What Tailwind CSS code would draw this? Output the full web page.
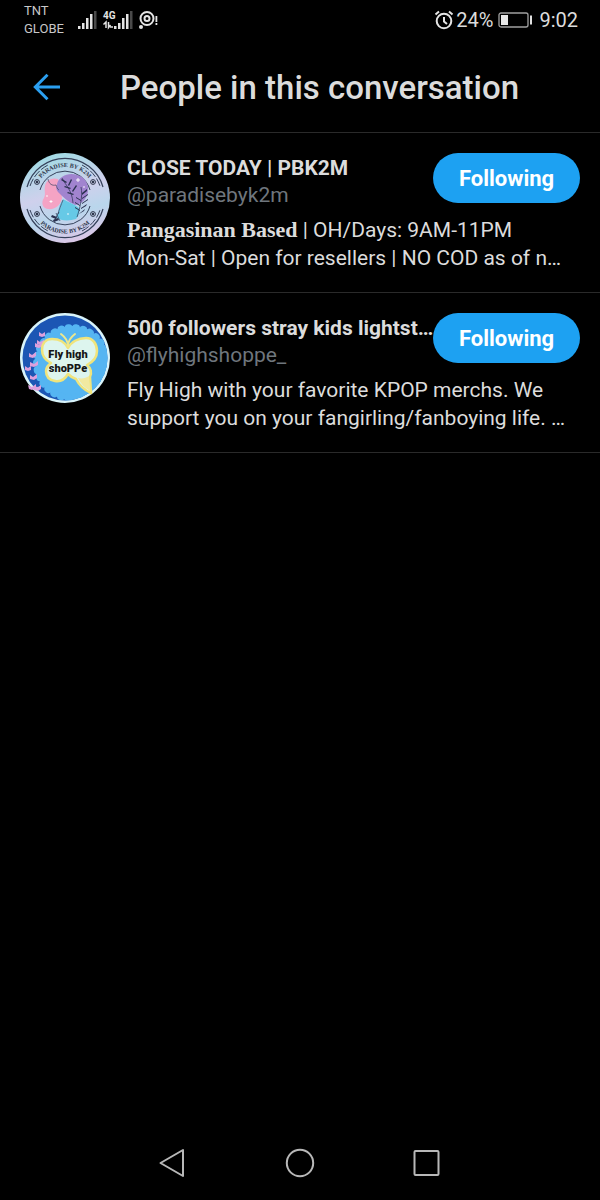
<!DOCTYPE html>
<html lang="en">
<head>
  <meta charset="UTF-8" />
  <meta name="viewport" content="width=device-width, initial-scale=1.0"/>
  <title>People in this conversation</title>
  <script src="https://cdn.jsdelivr.net/npm/@tailwindcss/browser@4"></script>
</head>
<body class="flex flex-col min-h-screen bg-black text-[#dcdcdc] font-['Roboto',sans-serif]">
  <!-- Status bar -->
  <div class="flex items-center justify-between h-10 pl-6 pr-[22px]">
    <div class="flex items-center gap-3">
      <p class="text-[13px] leading-[18px] text-[#c8c8c8]">TNT<br>GLOBE</p>
      <svg class="w-[82px] h-5" viewBox="0 0 82 20" fill="#e4e4e4" aria-hidden="true">
        <rect x="2" y="16" width="2.500" height="3"/><rect x="6" y="13" width="2.500" height="6"/><rect x="10" y="8" width="2.500" height="11"/><rect x="14" y="4" width="2.500" height="15"/><rect x="18" y="1" width="2.500" height="18" fill="#4a4a4a"/>
        <!-- 4G -->
        <text x="27" y="9" font-family="Roboto" font-size="10" font-weight="700">4G</text>
        <path d="M27.500 14.500 30 12v6M34.500 15 32.500 17.500V12M34 17h3" fill="none" stroke="#e4e4e4" stroke-width="1.500"/>
        <rect x="38" y="16" width="2.500" height="3"/><rect x="42" y="13" width="2.500" height="6"/><rect x="46" y="8" width="2.500" height="11"/><rect x="50" y="4" width="2.500" height="15"/><rect x="54" y="1" width="2.500" height="18" fill="#4a4a4a"/>
        <g fill="none" stroke="#e4e4e4" stroke-width="2"><circle cx="71" cy="8.500" r="6.500"/><circle cx="71" cy="8.500" r="2.500"/></g>
        <circle cx="65" cy="17" r="2"/><rect x="79.500" y="6" width="1.800" height="6"/><rect x="79.500" y="13" width="1.800" height="2"/>
      </svg>
    </div>
    <div class="flex items-center text-xl">
      <svg class="w-5 h-5" viewBox="0 0 20 20" fill="none" stroke="#e4e4e4" stroke-width="2" aria-hidden="true">
        <circle cx="10" cy="11" r="7.300"/><path d="M10 7v4.500l3 2.500M1.500 4.500 5 1.500M18.500 4.500 15 1.500"/>
      </svg>
      <span class="ml-[2px]">24%</span>
      <svg class="w-9 h-4 mx-[5px]" viewBox="0 0 36 16" aria-hidden="true">
        <rect x="1" y="1" width="29" height="14" rx="2" fill="none" stroke="#a0a0a0" stroke-width="1.300"/>
        <rect x="3" y="3" width="7" height="10" fill="#e8e8e8"/><rect x="32" y="3.500" width="2" height="9" fill="#e0e0e0"/>
      </svg>
      <span>9:02</span>
    </div>
  </div>

  <!-- Header -->
  <header class="flex items-center h-[93px] pl-8 pt-1 border-b border-[#2a2a2a]">
    <a href="#" aria-label="Back">
      <svg class="w-[30px] h-[30px]" viewBox="0 0 30 30" fill="none" stroke="#2b9ff0" stroke-width="3">
        <path d="M28 14H4M15.500 1.800 3.300 14l12.200 12.200"/>
      </svg>
    </a>
    <h1 class="ml-[58px] text-[33px] leading-10 font-medium">People in this conversation</h1>
  </header>

  <!-- People -->
  <main class="flex-grow">
    <article class="flex gap-[17px] p-5 border-b border-[#2a2a2a]">
      <svg class="shrink-0 w-[90px] h-[90px]" viewBox="0 0 90 90" role="img" aria-label="Paradise by K2M">
        <defs>
          <linearGradient id="holo" x1="0.300" y1="0" x2="0.600" y2="1">
            <stop offset="0" stop-color="#9fdbe4"/><stop offset="0.450" stop-color="#cfd0ec"/><stop offset="0.700" stop-color="#b9d6ec"/><stop offset="1" stop-color="#dcc6e6"/>
          </linearGradient>
          <path id="arcTop" d="M14 45a31 31 0 0 1 62 0"/>
          <path id="arcBottom" d="M9.500 45a35.500 35.500 0 0 0 71 0"/>
        </defs>
        <circle cx="45" cy="45" r="45" fill="url(#holo)"/>
        <g fill="none" stroke="#35415a">
          <path d="M7 34a39.500 39.500 0 0 1 76 0M7 56a39.500 39.500 0 0 0 76 0" stroke-width="1.200"/>
          <path d="M10 33a37 37 0 0 1 18-21M62 12a37 37 0 0 1 18 21M10 57a37 37 0 0 0 18 21M62 78a37 37 0 0 0 18-21" stroke-width="1" stroke-dasharray="8 2"/>
          <path d="M20 37a26 26 0 0 1 50 0M20 53a26 26 0 0 0 50 0" stroke-width="1"/>
        </g>
        <g font-family="Liberation Serif" font-size="6" font-weight="700" fill="#2c3348" text-anchor="middle">
          <text><textPath href="#arcTop" startOffset="50%">PARADISE BY K2M</textPath></text>
          <text><textPath href="#arcBottom" startOffset="50%">PARADISE BY K2M</textPath></text>
        </g>
        <g fill="none" stroke="#2c3348" stroke-width="1">
          <circle cx="17" cy="29" r="2.400"/><circle cx="73" cy="29" r="2.400"/><circle cx="17" cy="61" r="2.400"/><circle cx="73" cy="61" r="2.400"/>
        </g>
        <g fill="#2c3348"><circle cx="17" cy="29" r="1.200"/><circle cx="73" cy="29" r="1.200"/><circle cx="17" cy="61" r="1.200"/><circle cx="73" cy="61" r="1.200"/></g>
        <path d="M25 33c1-6 7-9 13-7l3 10 1 9c-1 7-7 12-14 11-6-1-7-7-4-11 2-4 0-8 1-12z" fill="#f5a3c4"/>
        <path d="M37 31c2-8 12-12 20-9 8 2 12 9 11 16-1 8-6 13-13 14-7-3-12-8-17-13-2-2-2-5-1-8z" fill="#a184cf"/>
        <path d="M43 46c6 4 12 5 16 9 1 4 0 8-3 11-6 2-15 2-19-1 1-7 2-13 6-19z" fill="#66c9e6"/>
        <path d="M28 26c1 5 4 7 8 6M36 32c1 2 1 4 3 5M43 47c-2 5-4 10-5 14" fill="none" stroke="#52506e" stroke-width="0.800"/>
        <!-- Leaves -->
        <path d="M42 25c4 8 10 12 11 25M61 34c2 9-1 21-4 30M34 68l5-9M36 60l4 8" fill="none" stroke="#2a3150" stroke-width="0.700"/>
        <g fill="#2a3150">
          <path d="M46 30l-5-3 1-1 5 3zM48 32l3-6 1 1-3 6zM50 36l-6-2 1-1 6 2zM52 38l4-6 1 1-4 6zM53 42l-6-2 1-1 6 2zM62 40l5-4v2l-5 4zM62 45l6-4v1l-6 4zM62 50l6-4v1l-6 4zM61 55l6-4-1 2-5 3zM60 60l5-4-1 2-5 3zM61 47l-5-3v1l5 3zM60 52l-5-3v1l5 3zM60 57l-5-3v1l5 3zM32 62l5 2-1 2-5-2zM33 67l5-2 1 2-5 2z"/>
        </g>
        <path d="M58 25v4M56 27h4M31 47v3M29.500 48.500h3M48 60v2M64 33v2M27 42v2" stroke="#fff" stroke-width="0.900"/>
      </svg>
      <div class="flex-1 min-w-0">
        <div class="flex items-start">
          <div class="flex-1 min-w-0 pt-[2px]">
            <h2 class="text-[21px] leading-[27px] font-bold whitespace-nowrap">CLOSE TODAY | PBK2M</h2>
            <p class="text-[21px] leading-[27px] text-[#6f767d]">@paradisebyk2m</p>
          </div>
          <button class="shrink-0 w-[147px] h-[50px] rounded-full bg-[#1da1f2] text-white text-[22px] font-bold">Following</button>
        </div>
        <p class="mt-[7px] text-[21px] leading-7 whitespace-nowrap"><span class="font-['Liberation_Serif',serif] text-[22px] font-bold">Pangasinan Based</span> | OH/Days: 9AM-11PM<br>Mon-Sat | Open for resellers | NO COD as of n…</p>
      </div>
    </article>

    <article class="flex gap-[17px] p-5 border-b border-[#2a2a2a]">
      <svg class="shrink-0 w-[90px] h-[90px]" viewBox="0 0 90 90" role="img" aria-label="Fly high shoppe">
        <defs><clipPath id="disc"><circle cx="45" cy="45" r="42.500"/></clipPath></defs>
        <circle cx="45" cy="45" r="45" fill="#d9f4fa"/>
        <circle cx="45" cy="45" r="42.500" fill="#1c56b4"/>
        <g clip-path="url(#disc)">
          <circle cx="52" cy="50" r="36" fill="#55b5f2"/>
          <circle cx="52" cy="50" r="35" fill="none" stroke="#55b5f2" stroke-width="8" stroke-linecap="round" stroke-dasharray="0.100 7.230"/>
        </g>
        <!-- Small butterflies -->
        <g fill="#dda0dc">
          <path d="M19 19l3 2 3-2v4l-3 1-3-1zM15 30l4 2 4-3v4l-4 2-4-1zM9 40l3 2 4-3v4l-3 2-4-1zM10 49l4 2 4-3v4l-4 2-4-1zM5 53l3 2 3-2v4l-3 1-3-1zM10 62l3 2 4-3v4l-3 2-4-1zM8 72l4 2 4-3v4l-4 2-3-1zM14 73l4 1 3-2v4l-3 2-4-1zM17 27l3 2 4-2v3l-4 2-3-1z"/>
        </g>
        <path d="M48 35c3-6 10-10 18-10 7 0 11 6 11 13 0 6-4 11-10 14 4 3 5 8 3 12l1 16c-7-3-12-8-15-14-3-1-6-3-8-5-3 5-8 8-13 7-6-1-9-5-9-10 0-4 2-6 5-8-6-3-9-8-9-13 0-7 4-11 10-11 7 0 13 3 16 9z" fill="#ddf5ee" stroke="#f0e47c" stroke-width="2.500" stroke-linejoin="round"/>
        <path d="M58 65c4 1 8 0 11-2l1 15c-5-3-9-7-12-13z" fill="#f1e9a0"/>
        <path d="M48 33c0-6-3-9-7-12M48 33c0-6 3-9 7-12" fill="none" stroke="#ece78e" stroke-width="2" stroke-linecap="round"/>
        <g font-family="Roboto" font-size="11" font-weight="900" fill="#151515" text-anchor="middle">
          <text x="48" y="45">Fly high</text>
          <text x="48" y="59">shoPPe</text>
        </g>
      </svg>
      <div class="flex-1 min-w-0">
        <div class="flex items-start">
          <div class="flex-1 min-w-0 pt-[2px]">
            <h2 class="text-[21px] leading-[27px] font-bold whitespace-nowrap">500 followers stray kids lightst…</h2>
            <p class="text-[21px] leading-[27px] text-[#6f767d]">@flyhighshoppe_</p>
          </div>
          <button class="shrink-0 w-[147px] h-[50px] rounded-full bg-[#1da1f2] text-white text-[22px] font-bold">Following</button>
        </div>
        <p class="mt-[7px] text-[21px] leading-7 whitespace-nowrap">Fly High with your favorite KPOP merchs. We<br>support you on your fangirling/fanboying life. …</p>
      </div>
    </article>
  </main>

  <!-- Navigation bar -->
  <nav class="flex justify-center gap-[97px] pb-[22px]">
    <button aria-label="Back">
      <svg class="w-[30px] h-[30px]" viewBox="0 0 30 30" fill="none" stroke="#b8b8b8" stroke-width="2" stroke-linejoin="round"><path d="M25 2v26L2.500 15z"/></svg>
    </button>
    <button aria-label="Home">
      <svg class="w-[30px] h-[30px]" viewBox="0 0 30 30" fill="none" stroke="#b8b8b8" stroke-width="2"><circle cx="15" cy="15" r="13.200"/></svg>
    </button>
    <button aria-label="Recent apps">
      <svg class="w-[30px] h-[30px]" viewBox="0 0 30 30" fill="none" stroke="#b8b8b8" stroke-width="2"><rect x="2.500" y="3" width="24" height="24" rx="1"/></svg>
    </button>
  </nav>
</body>
</html>
